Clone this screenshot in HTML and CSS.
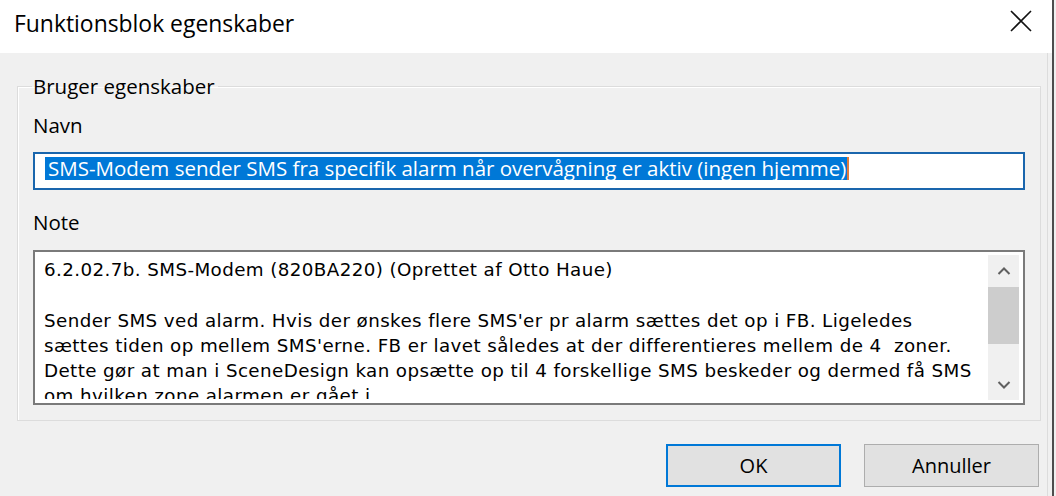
FILE: index.html
```html
<!DOCTYPE html>
<html lang="da">
<head>
<meta charset="utf-8">
<title>Funktionsblok egenskaber</title>
<link rel="stylesheet" href="styles.css">
</head>
<body>
<div class="window">
  <div class="titlebar">
    <span class="title">Funktionsblok egenskaber</span>
    <span class="close" aria-label="Luk">
      <svg width="22" height="22" viewBox="0 0 22 22"><path d="M1 1 L21 21 M21 1 L1 21" stroke="#111" stroke-width="1.6" fill="none"/></svg>
    </span>
  </div>
  <div class="content">
    <fieldset class="group">
      <legend>Bruger egenskaber</legend>
      <div class="label">Navn</div>
      <div class="input"><span class="sel">SMS-Modem sender SMS fra specifik alarm når overvågning er aktiv (ingen hjemme)</span></div>
      <div class="label note-label">Note</div>
      <div class="textarea">
        <div class="text">
          <p>6.2.02.7b. SMS-Modem (820BA220) (Oprettet af Otto Haue)</p>
          <p class="blank">&nbsp;</p>
          <p>Sender SMS ved alarm. Hvis der ønskes flere SMS'er pr alarm sættes det op i FB. Ligeledes</p>
          <p>sættes tiden op mellem SMS'erne. FB er lavet således at der differentieres mellem de 4&nbsp; zoner.</p>
          <p>Dette gør at man i SceneDesign kan opsætte op til 4 forskellige SMS beskeder og dermed få SMS</p>
          <p>om hvilken zone alarmen er gået i.</p>
        </div>
        <div class="scrollbar">
          <div class="arrow">
            <svg width="14" height="10" viewBox="0 0 14 10"><path d="M1.5 8 L7 2.5 L12.5 8" stroke="#606060" stroke-width="2" fill="none"/></svg>
          </div>
          <div class="track"><div class="thumb"></div></div>
          <div class="arrow">
            <svg width="14" height="10" viewBox="0 0 14 10"><path d="M1.5 2 L7 7.5 L12.5 2" stroke="#606060" stroke-width="2" fill="none"/></svg>
          </div>
        </div>
      </div>
    </fieldset>
    <div class="buttons">
      <button class="btn default">OK</button>
      <button class="btn">Annuller</button>
    </div>
  </div>
</div>
</body>
</html>
```
FILE: styles.css
```css
html, body {
  margin: 0;
  padding: 0;
  width: 1056px;
  height: 496px;
  overflow: hidden;
  background: #f0f0f0;
}
.window {
  width: 1052px;
  height: 496px;
  border-right: 2px solid #4d4d4d;
  box-shadow: inset -4px 0 0 #f0f0f0, inset -5px 0 0 #dcdcdc;
  font-family: "Open Sans", "Noto Sans", sans-serif;
  color: #000;
  display: flex;
  flex-direction: column;
  background: #f0f0f0;
}
.titlebar {
  height: 53px;
  background: #fff;
  display: flex;
  align-items: center;
  justify-content: space-between;
  padding-left: 14px;
  padding-right: 20px;
  flex: none;
}
.title {
  font-size: 22.9px;
  margin-top: -6px;
}
.close {
  display: flex;
  margin-top: -11px;
}
.content {
  flex: 1;
  padding: 19px 11px 0 17px;
}
.group {
  margin: 0;
  padding: 0 15px 15px 15px;
  border: 1px solid #dcdcdc;
  box-shadow: inset 1px 1px 0 #fff;
}
.group legend {
  font-size: 20.5px;
  line-height: 28px;
  height: 28px;
  padding: 0 3px 0 1px;
  margin-left: -1px;
}
.label {
  font-size: 20.5px;
  margin-top: 10px;
  height: 30px;
  line-height: 30px;
}
.note-label {
  margin-top: 17px;
}
.input {
  height: 38px;
  box-sizing: border-box;
  border: 2px solid #1a66ad;
  background: #fff;
  margin-top: 12px;
  margin-bottom: 0;
  padding: 3px 0 0 10px;
  font-size: 20.5px;
  line-height: 23px;
}
.sel {
  display: inline-block;
  height: 23px;
  line-height: 22px;
  background: #0078d7;
  color: #fff;
  padding: 0 1px 0 3px;
  border-right: 2px solid #e07a3a;
}
.textarea {
  margin-top: 13px;
  height: 155px;
  box-sizing: border-box;
  border: 2px solid #7a7a7a;
  background: #fff;
  display: flex;
  overflow: hidden;
}
.text {
  flex: 1;
  margin-bottom: 4px;
  padding: 5px 0 0 9px;
  font-family: "DejaVu Sans", sans-serif;
  font-size: 18.3px;
  letter-spacing: 0.4px;
  line-height: 25.3px;
  white-space: nowrap;
  overflow: hidden;
}
.text p {
  margin: 0;
}
.scrollbar {
  width: 31px;
  margin: 3px 4px 3px 0;
  background: #f0f0f0;
  display: flex;
  flex-direction: column;
  flex: none;
}
.arrow {
  height: 31px;
  display: flex;
  align-items: center;
  justify-content: center;
  flex: none;
}
.track {
  flex: 1;
}
.thumb {
  height: 57px;
  background: #cdcdcd;
  margin-top: 1px;
}
.buttons {
  display: flex;
  justify-content: flex-end;
  gap: 23px;
  padding-top: 23px;
  padding-right: 2px;
}
.btn {
  width: 175px;
  height: 43px;
  box-sizing: border-box;
  background: #e1e1e1;
  border: 1px solid #adadad;
  font-family: "Open Sans", "Noto Sans", sans-serif;
  font-size: 20px;
  color: #000;
  padding: 0;
}
.btn.default {
  border: 2px solid #0078d7;
}
```
